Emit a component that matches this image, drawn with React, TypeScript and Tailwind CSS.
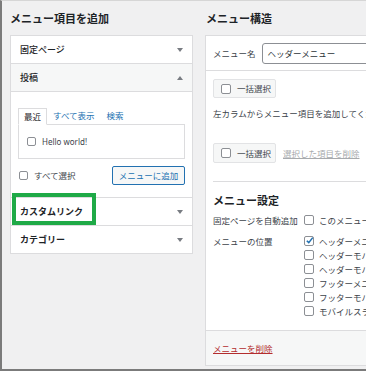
import React from "react";

function Box({ checked = false }: { checked?: boolean }) {
  return (
    <span className="relative inline-flex w-[10px] h-[10px] shrink-0 border border-[#8c8f94] rounded-[2px] bg-white items-center justify-center">
      {checked && (
        <svg width="9" height="9" viewBox="0 0 10 10" className="absolute left-[0px] top-[-1px]">
          <path d="M2 5.2 L4.2 7.4 L8.6 1.8" stroke="#2271b1" strokeWidth="1.7" fill="none" />
        </svg>
      )}
    </span>
  );
}

function SmallBox() {
  return <span className="inline-block w-[9px] h-[9px] shrink-0 border border-[#8c8f94] rounded-[2px] bg-white" />;
}

function Down() {
  return (
    <svg width="6" height="4" viewBox="0 0 6 4">
      <polygon points="0,0 6,0 3,4" fill="#787c82" />
    </svg>
  );
}

function Up() {
  return (
    <svg width="6" height="4" viewBox="0 0 6 4">
      <polygon points="0,4 6,4 3,0" fill="#787c82" />
    </svg>
  );
}

export default function App() {
  return (
    <div className="w-[366px] h-[371px] overflow-hidden bg-[#f0f0f1] border-l-2 border-b-2 border-t border-l-[#7b7b7b] border-b-[#7b7b7b] border-t-[#d6d6d6] flex pl-[8px] gap-[12px] font-['Noto_Sans_CJK_JP',sans-serif] text-[#1d2327] leading-none">
      {/* Left column */}
      <div className="w-[183px] shrink-0 flex flex-col">
        <div className="h-[34px] flex items-center text-[11px] font-semibold">メニュー項目を追加</div>
        <div className="border border-[#dcdcde] bg-white">
          <div className="h-[28px] border-b border-[#dcdcde] flex items-center justify-between pl-[9px] pr-[9px] text-[9px] font-medium">
            <span>固定ページ</span>
            <Down />
          </div>
          <div className="h-[28px] border-b border-[#dcdcde] bg-[#f6f7f7] flex items-center justify-between pl-[9px] pr-[9px] text-[9px] font-medium">
            <span>投稿</span>
            <Up />
          </div>
          <div className="border-b border-[#dcdcde] pt-[15px] px-[7px] pb-[12px]">
            <div className="flex items-end text-[8.5px]">
              <div className="relative z-10 -mb-px h-[17px] px-[5px] border border-[#dcdcde] border-b-white bg-white flex items-center text-[#1d2327]">最近</div>
              <div className="h-[17px] px-[6px] flex items-center text-[#2271b1]">すべて表示</div>
              <div className="h-[17px] px-[6px] flex items-center text-[#2271b1]">検索</div>
            </div>
            <div className="h-[35px] border border-[#dcdcde] flex items-center pl-[8px] gap-[6px] text-[8px] text-[#3c434a]">
              <SmallBox />
              <span className="font-['Noto_Sans',sans-serif]">Hello world!</span>
            </div>
            <div className="mt-[7px] flex items-center justify-between">
              <div className="flex items-center gap-[6px] pl-[1px] text-[8.5px] text-[#3c434a]">
                <SmallBox />
                <span>すべて選択</span>
              </div>
              <div className="w-[73px] h-[19px] border border-[#2271b1] rounded-[2px] bg-[#f6f7f7] flex items-center justify-center text-[8.5px] text-[#2271b1]">
                メニューに追加
              </div>
            </div>
          </div>
          <div className="relative h-[28px] border-b border-[#dcdcde] flex items-center justify-between pl-[9px] pr-[9px] text-[9px] font-semibold">
            <span>カスタムリンク</span>
            <Down />
            <div className="absolute left-[1px] top-[-5px] w-[84px] h-[32px] border-[4px] border-[#1faa47]" />
          </div>
          <div className="h-[27px] flex items-center justify-between pl-[9px] pr-[9px] text-[9px] font-semibold">
            <span>カテゴリー</span>
            <Down />
          </div>
        </div>
      </div>

      {/* Right column */}
      <div className="w-[175px] shrink-0 flex flex-col">
        <div className="h-[34px] flex items-center pl-[1px] text-[11px] font-semibold">メニュー構造</div>
        <div className="h-[331px] border border-[#dcdcde] bg-white flex flex-col">
          <div className="h-[35px] shrink-0 border-b border-[#dcdcde] flex items-center pl-[7px] text-[8.5px] text-[#3c434a] whitespace-nowrap">
            <span className="shrink-0">メニュー名</span>
            <div className="ml-[6px] w-[120px] shrink-0 h-[21px] border border-[#8c8f94] rounded-[3px] flex items-center pl-[5px] text-[8.5px] text-[#2c3338]">
              ヘッダーメニュー
            </div>
          </div>
          <div className="flex-1 px-[7px] pt-[8px]">
            <div className="w-[63px] h-[19px] bg-[#f6f7f7] border border-[#e2e3e5] rounded-[2px] flex items-center pl-[7px] gap-[6px] text-[8.5px] text-[#3c434a]">
              <Box />
              <span>一括選択</span>
            </div>
            <div className="mt-[9px] h-[12px] flex items-center text-[8.5px] text-[#3c434a] whitespace-nowrap">
              左カラムからメニュー項目を追加してください。
            </div>
            <div className="mt-[24px] flex items-center gap-[7px]">
              <div className="w-[63px] h-[20px] bg-[#f6f7f7] border border-[#e2e3e5] rounded-[2px] flex items-center pl-[7px] gap-[6px] text-[8.5px] text-[#3c434a]">
                <Box />
                <span>一括選択</span>
              </div>
              <span className="text-[8.5px] text-[#a7aaad] underline whitespace-nowrap">選択した項目を削除</span>
            </div>
            <div className="mt-[18px] border-t border-[#dcdcde] pt-[11px]">
              <div className="h-[14px] flex items-center text-[11px] font-semibold">メニュー設定</div>
              <div className="mt-[6px] flex">
                <div className="w-[91px] shrink-0 h-[14px] flex items-center text-[8.5px] text-[#3c434a]">固定ページを自動追加</div>
                <div className="h-[14px] flex items-center gap-[5px] text-[8.5px] text-[#3c434a] whitespace-nowrap">
                  <Box />
                  <span>このメニューに新しいトップレベルページを自動追加</span>
                </div>
              </div>
              <div className="mt-[7px] flex">
                <div className="w-[91px] shrink-0 h-[14px] flex items-center text-[8.5px] text-[#3c434a]">メニューの位置</div>
                <div className="flex flex-col text-[8.5px] text-[#3c434a] whitespace-nowrap">
                  {[
                    { t: "ヘッダーメニュー", c: true },
                    { t: "ヘッダーモバイルメニュー", c: false },
                    { t: "ヘッダーモバイルボタン", c: false },
                    { t: "フッターメニュー", c: false },
                    { t: "フッターモバイルボタン", c: false },
                    { t: "モバイルスライドインメニュー", c: false },
                  ].map((o, i) => (
                    <div key={i} className="h-[14px] flex items-center gap-[5px]">
                      <Box checked={o.c} />
                      <span>{o.t}</span>
                    </div>
                  ))}
                </div>
              </div>
            </div>
          </div>
          <div className="h-[35px] shrink-0 border-t border-[#dcdcde] bg-[#f6f7f7] flex items-center pl-[7px]">
            <span className="text-[8.5px] text-[#b32d2e] underline">メニューを削除</span>
          </div>
        </div>
      </div>
    </div>
  );
}
